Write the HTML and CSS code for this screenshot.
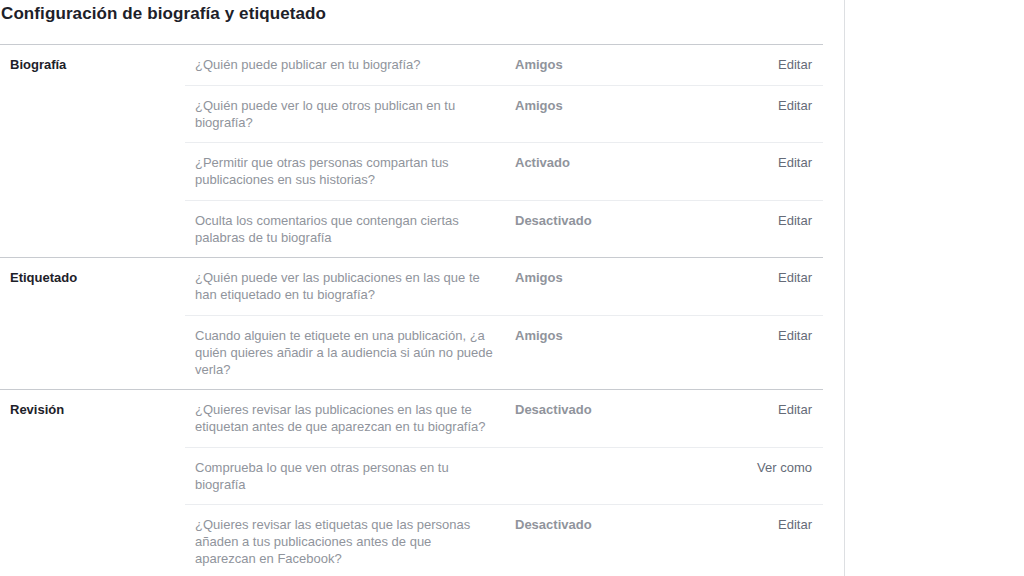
FILE: index.html
```html
<!DOCTYPE html>
<html lang="es">
<head>
<meta charset="utf-8">
<title>Configuración de biografía y etiquetado</title>
<link rel="stylesheet" href="styles.css">
</head>
<body>
<div class="page">
  <div class="main">
    <h2 class="title">Configuración de biografía y etiquetado</h2>
    <div class="settings">
      <section class="group">
        <div class="label">Biografía</div>
        <div class="items">
          <div class="item"><div class="q">¿Quién puede publicar en tu biografía?</div><div class="status">Amigos</div><a class="action" href="#">Editar</a></div>
          <div class="item"><div class="q">¿Quién puede ver lo que otros publican en tu biografía?</div><div class="status">Amigos</div><a class="action" href="#">Editar</a></div>
          <div class="item"><div class="q">¿Permitir que otras personas compartan tus publicaciones en sus historias?</div><div class="status">Activado</div><a class="action" href="#">Editar</a></div>
          <div class="item"><div class="q">Oculta los comentarios que contengan ciertas palabras de tu biografía</div><div class="status">Desactivado</div><a class="action" href="#">Editar</a></div>
        </div>
      </section>
      <section class="group">
        <div class="label">Etiquetado</div>
        <div class="items">
          <div class="item"><div class="q">¿Quién puede ver las publicaciones en las que te han etiquetado en tu biografía?</div><div class="status">Amigos</div><a class="action" href="#">Editar</a></div>
          <div class="item"><div class="q">Cuando alguien te etiquete en una publicación, ¿a quién quieres añadir a la audiencia si aún no puede verla?</div><div class="status">Amigos</div><a class="action" href="#">Editar</a></div>
        </div>
      </section>
      <section class="group">
        <div class="label">Revisión</div>
        <div class="items">
          <div class="item"><div class="q">¿Quieres revisar las publicaciones en las que te etiquetan antes de que aparezcan en tu biografía?</div><div class="status">Desactivado</div><a class="action" href="#">Editar</a></div>
          <div class="item"><div class="q">Comprueba lo que ven otras personas en tu biografía</div><div class="status"></div><a class="action" href="#">Ver como</a></div>
          <div class="item"><div class="q">¿Quieres revisar las etiquetas que las personas añaden a tus publicaciones antes de que aparezcan en Facebook?</div><div class="status">Desactivado</div><a class="action" href="#">Editar</a></div>
        </div>
      </section>
    </div>
  </div>
</div>
</body>
</html>
```
FILE: styles.css
```css
html, body {
  margin: 0;
  padding: 0;
  background: #ffffff;
  font-family: "Liberation Sans", Arial, sans-serif;
  height: 100%;
  overflow: hidden;
}
.page {
  display: flex;
  height: 100%;
}
.main {
  width: 845px;
  border-right: 1px solid #dddfe2;
  box-sizing: border-box;
  height: 100%;
}
.title {
  margin: 0;
  padding: 4px 0 0 1px;
  height: 40px;
  font-size: 17px;
  line-height: 20px;
  font-weight: bold;
  letter-spacing: 0.1px;
  color: #1d2129;
}
.settings {
  width: 823px;
}
.group {
  display: flex;
  border-top: 1px solid #c8cbd0;
}
.label {
  width: 175px;
  padding: 11px 0 0 10px;
  font-size: 13px;
  line-height: 17px;
  font-weight: bold;
  color: #1d2129;
}
.items {
  flex: 1;
}
.item {
  display: flex;
  align-items: flex-start;
  padding: 11px 11px 11.5px 10px;
  border-top: 1px solid #ebedf0;
  font-size: 13px;
  line-height: 17px;
}
.item:first-child {
  border-top: none;
}
.q {
  width: 300px;
  color: #90949c;
}
.status {
  margin-left: 20px;
  width: 150px;
  font-weight: bold;
  color: #90949c;
}
.action {
  margin-left: auto;
  color: #656b78;
  text-decoration: none;
}
```
